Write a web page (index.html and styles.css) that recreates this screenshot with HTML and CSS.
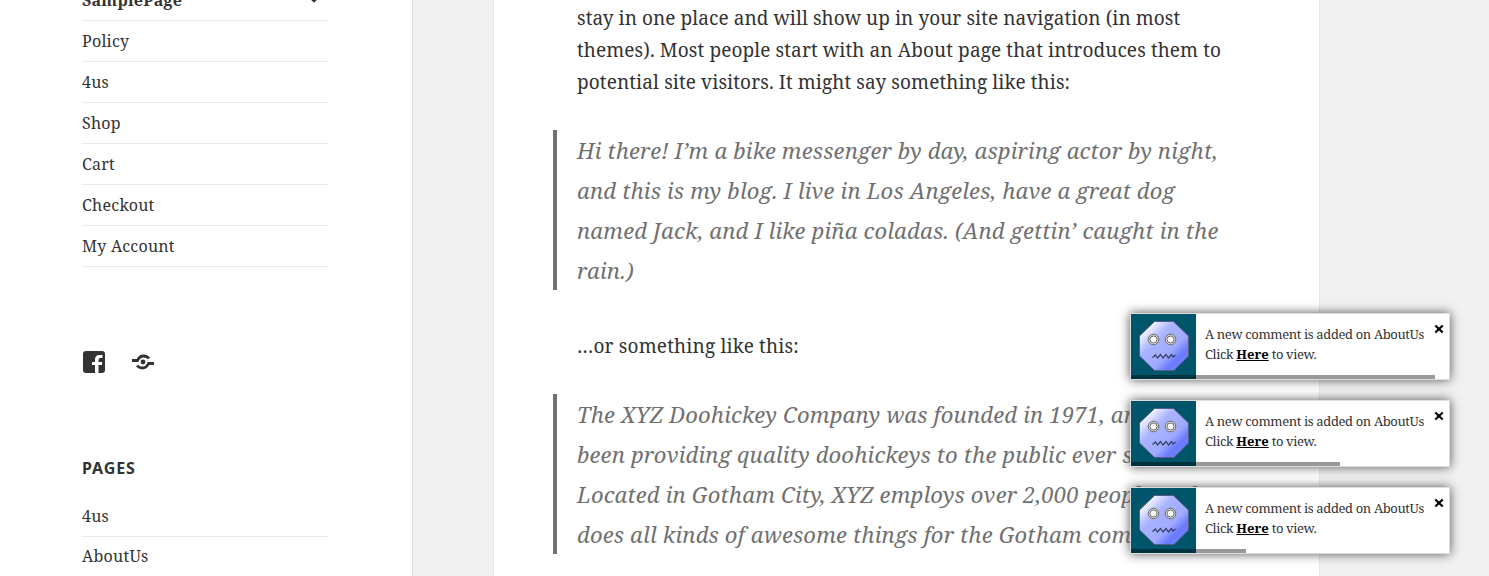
FILE: index.html
```html
<!DOCTYPE html>
<html lang="en">
<head>
<meta charset="utf-8">
<title>AboutUs</title>
<link rel="stylesheet" href="styles.css">
</head>
<body>
<svg width="0" height="0" class="defs">
  <defs>
    <linearGradient id="body" x1="0" y1="0" x2="1" y2="1">
      <stop offset=".12" stop-color="#fff"/><stop offset=".36" stop-color="#a9b3ff"/><stop offset=".62" stop-color="#a0abff"/><stop offset=".76" stop-color="#6a7bff"/><stop offset=".9" stop-color="#7181ff"/>
    </linearGradient>
    <symbol id="avatar" viewBox="0 0 65 65">
      <path d="M23.500 7.500h19L57.500 22v20L43 56.500H23.500L8.500 42V22z" fill="url(#body)" stroke="#555d80"/>
      <g fill="#fff" stroke="#666"><circle cx="22.500" cy="25.500" r="5.300" fill="#ddd"/><circle cx="22.500" cy="25.500" r="3.500"/><circle cx="39.500" cy="25.500" r="5.300" fill="#ddd"/><circle cx="39.500" cy="25.500" r="3.500"/></g>
      <path d="M21.500 43.500l3-2.500 2 3 3-3.500 2.500 3.500 3-3.500 2.500 3.500 3-3.500 1.500 2.500 2.500-2" fill="none" stroke="#343b60" stroke-width="1.200"/>
    </symbol>
    <symbol id="close" viewBox="0 0 10 10"><path d="M1.300 1.500l7.400 7M8.700 1.500l-7.400 7" stroke="#000" stroke-width="2.200"/></symbol>
  </defs>
</svg>
<div class="page">
  <aside class="sidebar">
    <ul class="menu">
      <li class="current"><span>SamplePage</span><svg class="chevron" viewBox="0 0 10 8"><path d="M1.500 2L5 5.500 8.500 2" fill="none" stroke="#333" stroke-width="1.800"/></svg></li>
      <li>Policy</li>
      <li>4us</li>
      <li>Shop</li>
      <li>Cart</li>
      <li>Checkout</li>
      <li>My Account</li>
    </ul>
    <div class="social">
      <svg width="24" height="24" viewBox="0 0 24 24"><path fill="#333" d="M4 1h16a3 3 0 0 1 3 3v16a3 3 0 0 1-3 3h-3.500v-8H20v-3h-3.500v-2q0-2 2-2h2V5h-3q-4.500 0-4.500 4.500V12h-3v3h3v8H4a3 3 0 0 1-3-3V4a3 3 0 0 1 3-3z"/></svg>
      <svg width="24" height="24" viewBox="0 0 24 24"><g fill="none" stroke="#333" stroke-width="2.800"><path d="M1 10.500h5.500q2-4.500 6-4.500 3.500 0 5.500 2.500"/><path d="M23 13.500h-5.500q-2 4.500-6 4.500-3.500 0-5.500-2.500"/></g><circle cx="12" cy="12" r="2.400" fill="#333"/></svg>
    </div>
    <h2 class="widget-title">PAGES</h2>
    <ul class="menu pages">
      <li>4us</li>
      <li>AboutUs</li>
    </ul>
  </aside>
  <main class="article">
    <p><span class="tight">stay in one place and will show up in your site navigation (in most</span><span>themes). Most people start with an About page that introduces them to</span><span>potential site visitors. It might say something like this:</span></p>
    <blockquote><span>Hi there! I’m a bike messenger by day, aspiring actor by night,</span><span>and this is my blog. I live in Los Angeles, have a great dog</span><span>named Jack, and I like piña coladas. (And gettin’ caught in the</span><span>rain.)</span></blockquote>
    <p><span class="loose">…or something like this:</span></p>
    <blockquote><span>The XYZ Doohickey Company was founded in 1971, and has</span><span>been providing quality doohickeys to the public ever since.</span><span>Located in Gotham City, XYZ employs over 2,000 people and</span><span>does all kinds of awesome things for the Gotham community.</span></blockquote>
  </main>
</div>
<div class="toasts">
  <div class="toast">
    <svg class="avatar"><use href="#avatar"/></svg>
    <div class="message">A new comment is added on AboutUs<br>Click <a>Here</a> to view.</div>
    <svg class="close"><use href="#close"/></svg>
    <div class="progress" style="width:304px"></div>
  </div>
  <div class="toast">
    <svg class="avatar"><use href="#avatar"/></svg>
    <div class="message">A new comment is added on AboutUs<br>Click <a>Here</a> to view.</div>
    <svg class="close"><use href="#close"/></svg>
    <div class="progress" style="width:209px"></div>
  </div>
  <div class="toast">
    <svg class="avatar"><use href="#avatar"/></svg>
    <div class="message">A new comment is added on AboutUs<br>Click <a>Here</a> to view.</div>
    <svg class="close"><use href="#close"/></svg>
    <div class="progress" style="width:115px"></div>
  </div>
</div>
</body>
</html>
```
FILE: styles.css
```css
* { box-sizing: border-box; }
body { margin: 0; background: #f1f1f1; color: #333; font-family: "Noto Serif", "DejaVu Serif Condensed", serif; }
.defs { position: absolute; }
.page { display: flex; height: 576px; overflow: hidden; }
.sidebar { width: 413px; background: #fff; border-right: 1px solid #ddd; padding: 0 83px 0 82px; }
.menu { list-style: none; margin: -20px 0 0; padding: 0; font-size: 16px; letter-spacing: .25px; }
.menu li { height: 41px; line-height: 40px; border-bottom: 1px solid #eaeaea; display: flex; justify-content: space-between; }
.current { font-weight: bold; }
.chevron { width: 10px; height: 8px; margin: 16px 10px 0 0; }
.social { display: flex; gap: 25px; padding-top: 83px; }
.widget-title { font: bold 16px/24px "Noto Sans", sans-serif; letter-spacing: .9px; margin: 82px 0 0; }
.menu.pages { margin-top: 16px; }
.pages li:last-child { line-height: 38px; }
.article { margin-left: 80px; width: 827px; background: #fff; border: solid #e7e7e7; border-width: 0 1px; padding: 2px 83px 0; font-size: 19px; line-height: 32px; letter-spacing: .11px; }
p { margin: 0; }
p span, blockquote span { display: block; white-space: nowrap; }
.tight { letter-spacing: .06px; }
.loose { letter-spacing: .17px; }
blockquote { margin: 32px 0 40px -24px; border-left: 4px solid #707070; padding-left: 20px; font-size: 22px; line-height: 40px; letter-spacing: .19px; font-style: italic; color: #707070; }
.toasts { position: absolute; left: 1130px; top: 313px; display: flex; flex-direction: column; gap: 20px; }
.toast { position: relative; display: flex; width: 320px; height: 67px; background: #fff; border: 1px solid #ddd; box-shadow: 0 0 10px #555; }
.avatar { width: 65px; height: 65px; background: #00556b; flex: none; }
.message { padding: 10px 0 0 9px; flex: 1; min-width: 0; font-size: 13px; line-height: 20px; letter-spacing: -.37px; white-space: nowrap; }
.message a { color: #000; font-weight: bold; letter-spacing: 0; text-decoration: underline; }
.close { width: 10px; height: 10px; margin: 10px 5px 0 0; flex: none; }
.progress { position: absolute; left: 0; bottom: 0; height: 4px; background: rgba(0, 0, 0, .4); }
```
